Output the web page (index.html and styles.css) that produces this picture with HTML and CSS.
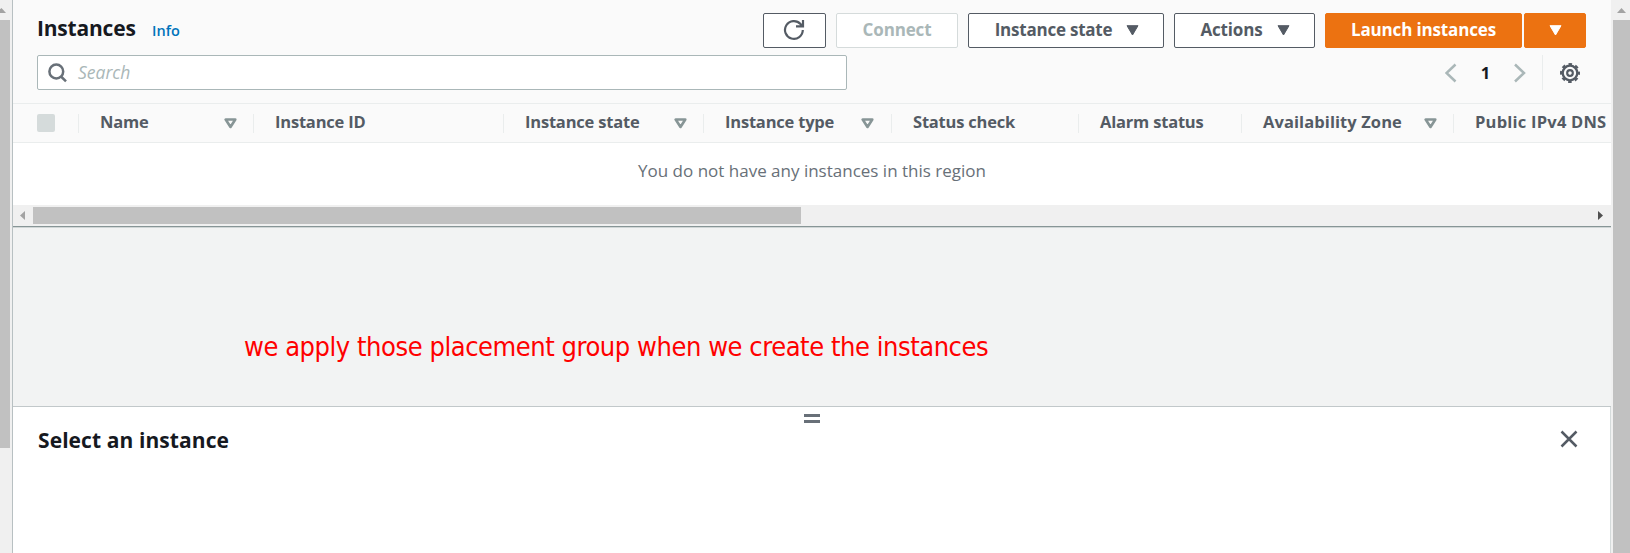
FILE: index.html
```html
<!DOCTYPE html>
<html lang="en">
<head>
<meta charset="utf-8">
<title>Instances</title>
<link rel="stylesheet" href="styles.css">
</head>
<body>
<div class="rail rail-left"><svg class="rail-arrow" width="10" height="20"><path d="M-4 13L1.500 8L6 13z" fill="#a3a3a3"/></svg><div class="rail-thumb short"></div></div>
<main class="main">
  <header class="head">
    <div class="title-row">
      <h1 class="title"><span>Instances</span></h1><a class="info"><span>Info</span></a>
      <div class="actions">
        <button class="btn refresh"><svg width="22" height="22" viewBox="0 0 22 22" fill="none" stroke="#545b64" stroke-width="2.200"><path d="M19.800 11A8.900 8.900 0 1 1 17.500 5L19 7M20 1V7.300H13"/></svg></button>
        <button class="btn connect"><span>Connect</span></button>
        <button class="btn state"><span>Instance state</span><svg width="13" height="11"><path d="M1 .7H12L6.500 10z" fill="#545b64" stroke="#545b64" stroke-linejoin="round"/></svg></button>
        <button class="btn act"><span>Actions</span><svg width="13" height="11"><path d="M1 .7H12L6.500 10z" fill="#545b64" stroke="#545b64" stroke-linejoin="round"/></svg></button>
        <button class="btn launch"><span>Launch instances</span></button>
        <button class="btn more"><svg width="13" height="11"><path d="M1 .7H12L6.500 10z" fill="#fff" stroke="#fff" stroke-linejoin="round"/></svg></button>
      </div>
    </div>
    <div class="tool-row">
      <div class="search"><svg width="20" height="20" viewBox="0 0 20 20" fill="none" stroke="#687078" stroke-width="2.500"><circle cx="8.300" cy="8.500" r="6.900"/><path d="M13 13.500L18 18.300"/></svg><span class="ph">Search</span></div>
      <div class="pager">
        <svg width="12" height="20" fill="none" stroke="#aab7b8" stroke-width="2.500"><path d="M10.500 1.500L1.500 10L10.500 18.500"/></svg>
        <span class="page">1</span>
        <svg width="12" height="20" fill="none" stroke="#aab7b8" stroke-width="2.500"><path d="M1 1.500L10 10L1 18.500"/></svg>
        <div class="gear"><svg width="20" height="20" viewBox="-10 -10 20 20" fill="none" stroke="#545b64"><circle r="7.300" stroke-width="2.300"/><circle r="9" stroke-width="2" stroke-dasharray="3.600 3.468" stroke-dashoffset="1.800"/><circle r="2.800" stroke-width="2.200"/></svg></div>
      </div>
    </div>
  </header>
  <div class="columns">
    <div class="col c0"><i class="check"></i></div>
    <div class="col c1"><span>Name</span><svg class="sort" width="13" height="11"><path d="M1.700 1.500H11.300L6.500 9z"/></svg></div>
    <div class="col c2"><span>Instance ID</span></div>
    <div class="col c3"><span>Instance state</span><svg class="sort" width="13" height="11"><path d="M1.700 1.500H11.300L6.500 9z"/></svg></div>
    <div class="col c4"><span>Instance type</span><svg class="sort" width="13" height="11"><path d="M1.700 1.500H11.300L6.500 9z"/></svg></div>
    <div class="col c5"><span>Status check</span></div>
    <div class="col c6"><span>Alarm status</span></div>
    <div class="col c7"><span>Availability Zone</span><svg class="sort" width="13" height="11"><path d="M1.700 1.500H11.300L6.500 9z"/></svg></div>
    <div class="col c8"><span>Public IPv4 DNS</span></div>
  </div>
  <div class="empty"><span>You do not have any instances in this region</span></div>
  <div class="hscroll"><svg width="20" height="17"><path d="M12 4V13L7 8.500z" fill="#a3a3a3"/></svg><div class="hthumb"></div><svg class="end" width="20" height="17"><path d="M7 4V13L12 8.500z" fill="#505050"/></svg></div>
  <section class="canvas"><p class="note"><span>we apply those placement group when we create the instances</span></p></section>
  <section class="panel">
    <div class="grip"><i></i><i></i></div>
    <div class="panel-row"><h2 class="panel-title"><span>Select an instance</span></h2><svg width="18" height="18" fill="none" stroke="#545b64" stroke-width="2.500"><path d="M1.500 1.500L16.500 16.500M16.500 1.500L1.500 16.500"/></svg></div>
  </section>
</main>
<div class="rail rail-right"><svg class="rail-arrow" width="17" height="20"><path d="M4 13L8.500 8L13 13z" fill="#a3a3a3"/></svg><div class="rail-thumb"></div></div>
</body>
</html>
```
FILE: styles.css
```css
* { box-sizing: border-box; }
body { margin: 0; width: 1630px; height: 553px; display: flex; overflow: hidden; background: #f0f0f0; font-family: "Open Sans", "Noto Sans", sans-serif; color: #16191f; }
h1, h2, p { margin: 0; }
svg { display: block; flex: none; }
span { white-space: nowrap; }
.rail { flex: none; display: flex; flex-direction: column; background: #f0f0f0; }
.rail-left { width: 12px; }
.rail-right { width: 19px; padding-left: 2px; }
.rail-thumb { flex: 1; background: #c1c1c1; }
.rail-thumb.short { flex: none; width: 10px; height: 428px; }
.main { width: 1599px; flex: none; display: flex; flex-direction: column; border-left: 1px solid #b8c0c2; overflow: hidden; }
.head { height: 103px; flex: none; background: #fafafa; padding: 13px 25px 0 24px; }
.title-row { display: flex; height: 35px; }
.title { width: 99px; font-size: 21px; font-weight: 700; line-height: 30px; letter-spacing: -0.200px; }
.info { margin-left: 16px; font-size: 14.500px; font-weight: 600; line-height: 36px; color: #0073bb; }
.actions { margin-left: auto; display: flex; gap: 10px; }
.btn { height: 35px; padding: 0 0 1px; display: flex; align-items: center; justify-content: center; background: #fff; border: 1px solid #545b64; border-radius: 2px; color: #545b64; font: 700 17px "Open Sans", sans-serif; letter-spacing: -0.150px; }
.btn span { margin-top: -1px; }
.refresh { width: 63px; padding-right: 2px; }
.connect { width: 122px; border-color: #d5dbdb; color: #aab7b8; }
.state { width: 196px; gap: 14px; padding-left: 2px; letter-spacing: -0.220px; }
.act { width: 141px; gap: 14px; padding-left: 1px; }
.launch { width: 197px; background: #ec7211; border-color: #ec7211; color: #fff; }
.more { width: 62px; margin-left: -8px; background: #ec7211; border-color: #ec7211; }
.tool-row { display: flex; margin-top: 7px; height: 35px; }
.search { width: 810px; height: 35px; display: flex; align-items: center; gap: 10px; padding-left: 10px; border: 1px solid #aab7b8; border-radius: 2px; background: #fff; }
.ph { font-size: 17.500px; font-style: italic; line-height: 20px; padding-bottom: 1px; color: #aab7b8; }
.pager { margin-left: auto; display: flex; align-items: center; }
.page { width: 57px; padding-bottom: 1px; text-align: center; font-size: 16.500px; font-weight: 700; }
.gear { margin-left: 16px; height: 35px; padding: 0 6px 0 17px; display: flex; align-items: center; border-left: 1px solid #eaeded; }
.columns { height: 40px; flex: none; display: flex; align-items: center; background: #fafafa; border-top: 1px solid #eaeded; border-bottom: 1px solid #eaeded; }
.col { flex: none; height: 19px; display: flex; align-items: center; justify-content: space-between; padding: 0 16px 0 21px; border-right: 1px solid #eaeded; font-size: 16.500px; font-weight: 700; line-height: 19px; letter-spacing: -0.200px; color: #545b64; }
.col span { margin-top: -4px; }
.c0 { width: 66px; padding-left: 24px; }
.c1 { width: 175px; }
.c2 { width: 250px; }
.c3 { width: 200px; }
.c4 { width: 188px; padding-right: 17px; }
.c5 { width: 187px; }
.c6 { width: 163px; }
.c7 { width: 212px; letter-spacing: 0.080px; }
.c8 { width: 200px; letter-spacing: 0.220px; }
.check { width: 18px; height: 18px; border-radius: 2px; background: #d5dbdb; }
.sort { fill: none; stroke: #879596; stroke-width: 2.600px; stroke-linejoin: round; }
.empty { height: 62px; flex: none; background: #fff; text-align: center; font-size: 17px; line-height: 56px; color: #687078; }
.hscroll { height: 22px; flex: none; display: flex; padding: 2px 0; background: #f0f0f0; border-bottom: 1px solid #879596; }
.hthumb { width: 768px; height: 17px; background: #c1c1c1; }
.end { margin-left: auto; }
.canvas { height: 180px; flex: none; background: #f2f3f3; border-top: 1px solid #d0d6d6; border-bottom: 1px solid #c2c8ca; }
.note { padding: 101px 0 0 231px; font: 27px/36px "DejaVu Sans Condensed", "Noto Sans", sans-serif; letter-spacing: -0.450px; color: #f00; }
.panel { flex: 1; background: #fff; border-right: 1px solid #d5dbdb; padding: 7px 32px 0 25px; }
.grip { width: 16px; margin-left: 766px; display: flex; flex-direction: column; gap: 3px; }
.grip i { height: 3px; background: #687078; }
.panel-row { display: flex; justify-content: space-between; align-items: center; height: 34px; }
.panel-row svg { margin-top: -2px; }
.panel-title { font-size: 21px; font-weight: 700; line-height: 34px; letter-spacing: 0.080px; }
```
